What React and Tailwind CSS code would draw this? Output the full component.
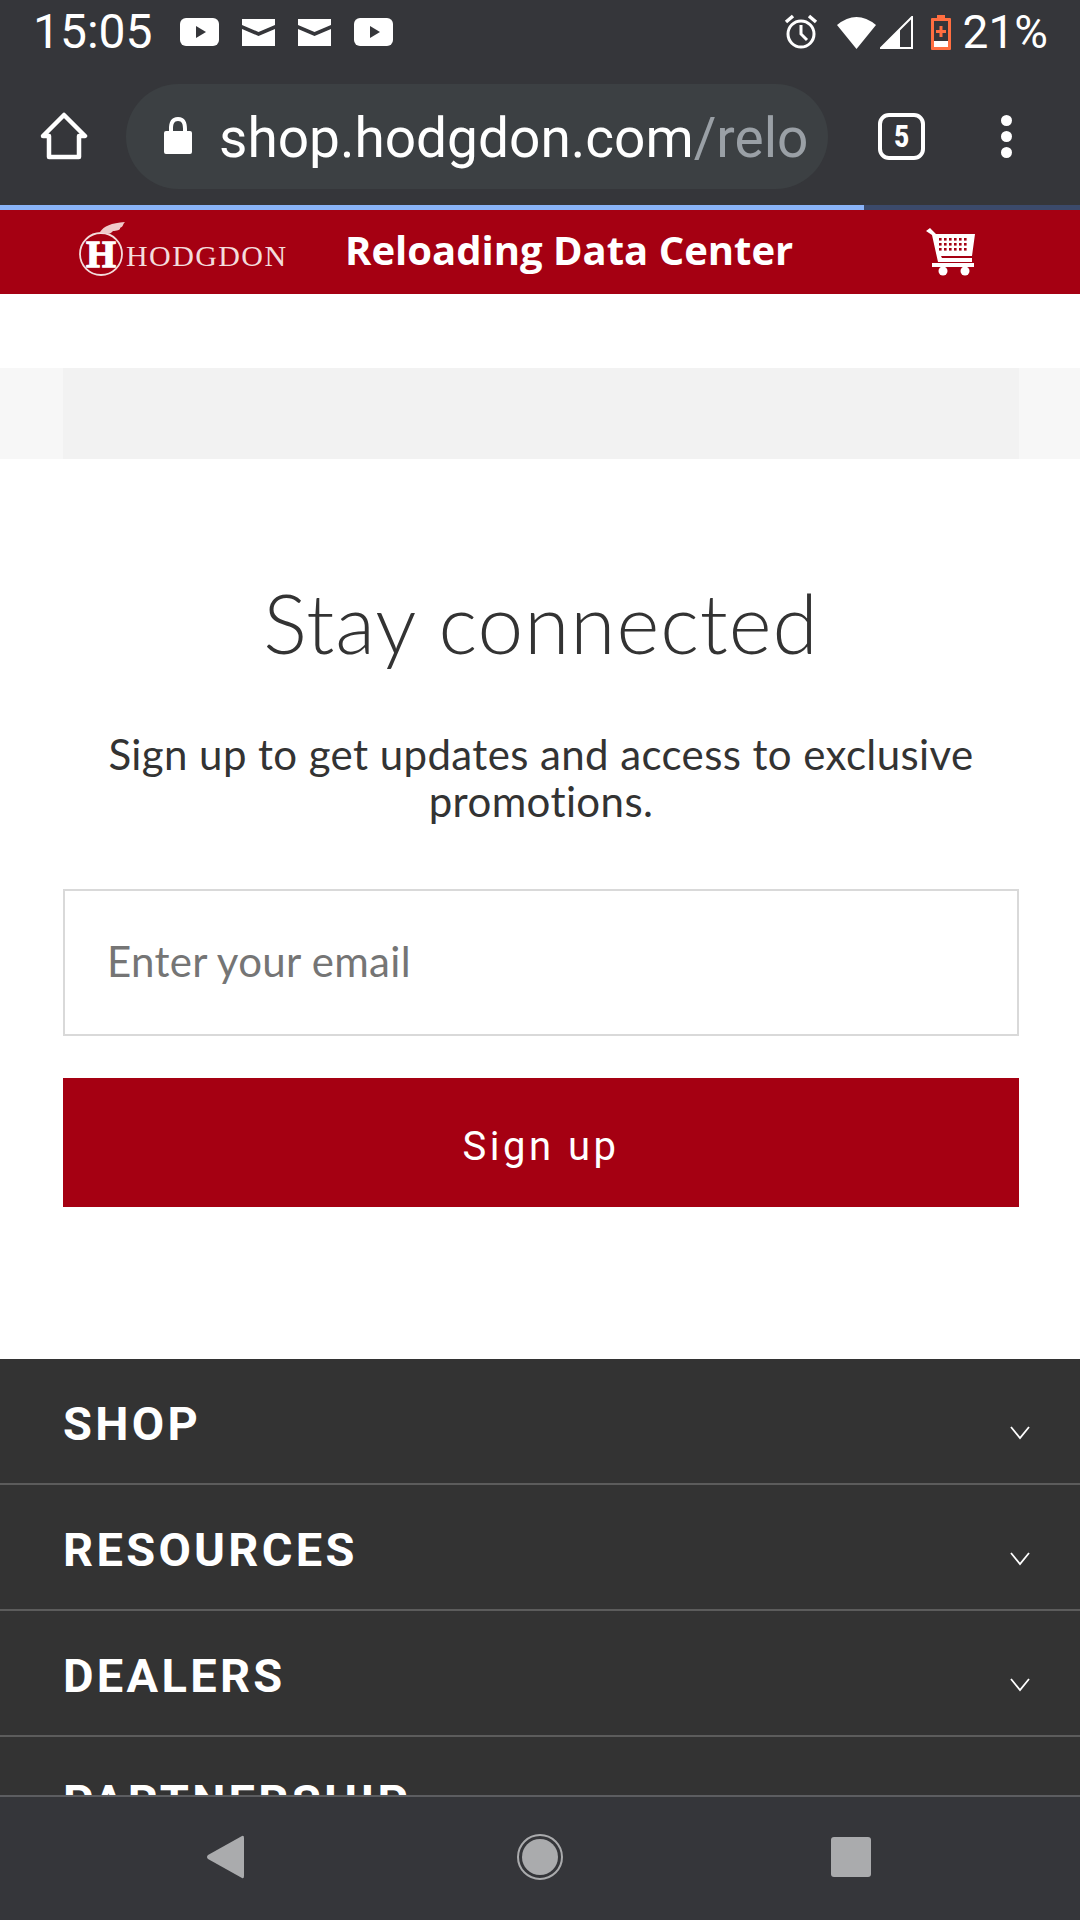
const FOOTER_LINKS = ["SHOP", "RESOURCES", "DEALERS", "PARTNERSHIP"];
const CART_COLS = [14, 19, 24, 29, 34, 39];
const CART_ROWS = [10, 15, 20];

function YoutubeIcon() {
  return (
    <svg width="39" height="28" viewBox="0 0 39 28">
      <rect width="39" height="28" rx="6" fill="#fff" />
      <path d="M16 8 L26 14 L16 20 Z" fill="#35363a" />
    </svg>
  );
}

function MailIcon() {
  return (
    <svg width="33" height="27" viewBox="0 0 33 27">
      <path d="M0 0 H33 V6 L16.5 13 L0 6 Z M0 10 L16.5 17 L33 10 V27 H0 Z" fill="#fff" />
    </svg>
  );
}

function StatusBar() {
  return (
    <div className="h-[64px] flex items-center justify-between pl-[33px] pr-[32px] text-white">
      <div className="flex items-center">
        <span className="text-[48px] leading-none font-['Roboto',sans-serif] w-[147px]">15:05</span>
        <div className="flex items-center gap-[23px]">
          <YoutubeIcon />
          <MailIcon />
          <MailIcon />
          <YoutubeIcon />
        </div>
      </div>
      <div className="flex items-center">
        <svg width="34" height="36" viewBox="0 0 34 36" fill="none" stroke="#fff" strokeWidth="3">
          <circle cx="17" cy="20" r="13" />
          <path d="M17 11 V20 L23 26" />
          <path d="M2 8 L9 2 M32 8 L25 2" strokeWidth="3.5" />
        </svg>
        <svg width="39" height="33" viewBox="0 0 39 33" className="ml-[19px]">
          <path d="M0 9 Q19.5 -7 39 9 L19.5 33 Z" fill="#fff" />
        </svg>
        <svg width="33" height="33" viewBox="0 0 33 33" className="ml-[4px]" fill="none">
          <path d="M32 1 V32 H1 Z" stroke="#fff" strokeWidth="2" />
          <path d="M20 13 V32 H1 Z" fill="#fff" />
        </svg>
        <svg width="20" height="35" viewBox="0 0 20 35" className="ml-[18px]">
          <path d="M6 0 H14 V3 H19 Q20 3 20 4 V34 Q20 35 19 35 H1 Q0 35 0 34 V4 Q0 3 1 3 H6 Z" fill="#ff6e40" />
          <rect x="3" y="6" width="14" height="20" fill="#35363a" />
          <rect x="3" y="26" width="14" height="6" fill="#fff" />
          <path d="M8.5 11 H11.5 V15 H15 V18 H11.5 V22 H8.5 V18 H5 V15 H8.5 Z" fill="#ff6e40" />
        </svg>
        <span className="text-[46px] leading-none font-['Roboto',sans-serif] ml-[12px]">21%</span>
      </div>
    </div>
  );
}

function Toolbar() {
  return (
    <div className="h-[141px] pt-[3px] flex items-center text-white">
      <div className="w-[126px] flex justify-center pl-[1px]">
        <svg width="48" height="48" viewBox="0 0 48 48" fill="none" stroke="#fff" strokeWidth="4.5" strokeLinejoin="round" strokeLinecap="round">
          <path d="M3 24 L24 3 L45 24 H39 V45 H9 V24 Z" />
        </svg>
      </div>
      <div className="w-[702px] h-[105px] rounded-full bg-[#3c4043] flex items-center pl-[38px] overflow-hidden">
        <svg width="28" height="38" viewBox="0 0 28 38" fill="#fff" className="shrink-0">
          <path d="M14 0 C7 0 5 5 5 12 V14 H2 Q0 14 0 16 V35 Q0 37 2 37 H26 Q28 37 28 35 V16 Q28 14 26 14 H23 V12 C23 5 21 0 14 0 Z M9 14 V12 C9 7 10 4 14 4 C18 4 19 7 19 12 V14 Z" fillRule="evenodd" />
        </svg>
        <span className="ml-[27px] mt-[4px] text-[55px] leading-none whitespace-nowrap font-['Roboto',sans-serif]">
          shop.hodgdon.com<span className="text-[#9aa0a6]">/relo</span>
        </span>
      </div>
      <div className="ml-[50px] w-[47px] h-[47px] rounded-[11px] border-[4.5px] border-white flex items-center justify-center">
        <span className="text-[31px] leading-none font-bold font-['Roboto_Condensed','Roboto',sans-serif]">5</span>
      </div>
      <div className="ml-[76px] flex flex-col gap-[5px]">
        <span className="w-[11px] h-[11px] rounded-full bg-white" />
        <span className="w-[11px] h-[11px] rounded-full bg-white" />
        <span className="w-[11px] h-[11px] rounded-full bg-white" />
      </div>
    </div>
  );
}

function HodgdonLogo() {
  return (
    <div className="flex items-center text-[#f3dcdc]">
      <svg width="47" height="56" viewBox="0 0 47 56" fill="none" className="-mt-[6px]">
        <circle cx="22" cy="33" r="21" stroke="#f3dcdc" strokeWidth="1.8" />
        <path d="M21 11 C25 5 32 2 46 1 C43 4 45 5 41 7 C42 9 37 10 34 10 C31 14 26 13 21 11 Z" fill="#f0caca" />
        <text x="22" y="46" textAnchor="middle" fontSize="38" fontWeight="700" fontFamily="Liberation Serif, serif" fill="#fff" stroke="#fff" strokeWidth="1.5">H</text>
      </svg>
      <span className="mt-[8px] text-[30px] leading-none tracking-[1.4px] font-['Liberation_Serif',serif]">HODGDON</span>
    </div>
  );
}

function CartIcon() {
  return (
    <svg width="51" height="48" viewBox="0 0 51 48" fill="#fff">
      <path d="M1 3 L5 0 L11 6 H50 L47 28 H16 L17 30 H47 V34 H13 L7 7 Z" />
      <g fill="#a50012">
        {CART_ROWS.map((y) =>
          CART_COLS.map((x) => <rect key={`${x}-${y}`} x={x} y={y} width="2.6" height="2.6" />)
        )}
      </g>
      <circle cx="18" cy="43" r="4.5" />
      <circle cx="40" cy="43" r="4.5" />
      <rect x="7" y="35" width="42" height="4" />
    </svg>
  );
}

function SiteHeader() {
  return (
    <header className="h-[84px] bg-[#a50012] flex items-center text-white shrink-0">
      <div className="w-[345px] pl-[79px]">
        <HodgdonLogo />
      </div>
      <h1 className="w-[580px] -mt-[4px] text-[40px] leading-none font-bold font-['Open_Sans',sans-serif] whitespace-nowrap">Reloading Data Center</h1>
      <CartIcon />
    </header>
  );
}

function Newsletter() {
  return (
    <section className="pl-[63px] pr-[61px] pt-[115px] pb-[152px] text-center">
      <h2 className="text-[82px] leading-[96px] tracking-[1px] text-[#333] font-['Lato',sans-serif] font-light">Stay connected</h2>
      <p className="mt-[61px] text-[42px] leading-[47px] tracking-[0.4px] text-[#333] font-['Lato',sans-serif] [font-variant-ligatures:none]">
        Sign up to get updates and access to exclusive promotions.
      </p>
      <input
        type="email"
        placeholder="Enter your email"
        className="mt-[64px] block w-full h-[147px] pb-[4px] border-2 border-[#d9d9d9] bg-white pl-[42px] text-[42px] tracking-[0.3px] text-[#333] placeholder:text-[#757575] font-['Lato',sans-serif] outline-none"
      />
      <button className="mt-[42px] block w-full h-[129px] pt-[8px] bg-[#a50012] text-white text-[40px] tracking-[3.5px] font-['Roboto',sans-serif]">
        Sign up
      </button>
    </section>
  );
}

function FooterRow({ label }) {
  return (
    <div className="h-[126px] shrink-0 border-b-2 border-[#5c5c5c] flex items-center justify-between pl-[63px] pr-[50px]">
      <span className="text-[47px] leading-none font-bold tracking-[3.3px] text-white font-['Roboto',sans-serif] mt-[4px]">{label}</span>
      <svg width="20" height="14" viewBox="0 0 20 14" fill="none" stroke="#fff" strokeWidth="1.8" className="mt-[23px]">
        <path d="M1 1 L10 12 L19 1" />
      </svg>
    </div>
  );
}

export default function App() {
  return (
    <div className="w-[1080px] h-[1920px] flex flex-col overflow-hidden bg-white">
      <div className="bg-[#35363a] shrink-0">
        <StatusBar />
        <Toolbar />
      </div>
      <div className="h-[5px] bg-[#3b4a6b] shrink-0">
        <div className="w-[864px] h-full bg-[#8ab4f8]" />
      </div>
      <SiteHeader />
      <main className="flex-1 min-h-0 overflow-hidden">
        <div className="mt-[74px] h-[91px] bg-[#f7f7f7] pl-[63px] pr-[61px]">
          <div className="h-full bg-[#f2f2f2]" />
        </div>
        <Newsletter />
        <footer className="bg-[#333] h-full">
          {FOOTER_LINKS.map((label) => (
            <FooterRow key={label} label={label} />
          ))}
        </footer>
      </main>
      <nav className="h-[125px] pb-[4px] shrink-0 bg-[#35363a] border-t-2 border-[#5c5d60] flex items-center">
        <div className="w-[450px] flex justify-center">
          <svg width="38" height="44" viewBox="0 0 38 44" fill="#aaabad">
            <path d="M36 1 Q38 0 38 3 V41 Q38 44 36 43 L2 24 Q0 22 2 20 Z" />
          </svg>
        </div>
        <div className="w-[180px] flex justify-center">
          <svg width="46" height="46" viewBox="0 0 46 46">
            <circle cx="23" cy="23" r="22" fill="none" stroke="#aaabad" strokeWidth="2" />
            <circle cx="23" cy="23" r="18" fill="#aaabad" />
          </svg>
        </div>
        <div className="w-[442px] flex justify-center">
          <div className="w-[40px] h-[40px] rounded-[3px] bg-[#aaabad]" />
        </div>
      </nav>
    </div>
  );
}
